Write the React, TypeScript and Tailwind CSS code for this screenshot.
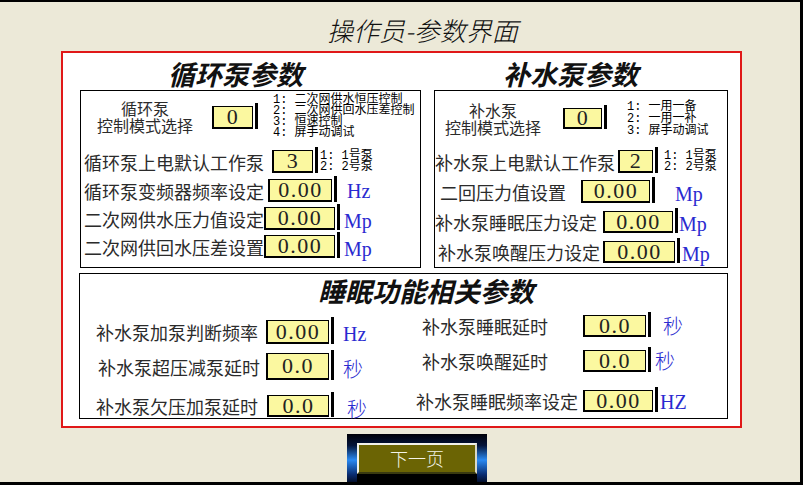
import React from "react";

const cjk = "font-['Noto_Sans_CJK_SC',sans-serif]";

// yellow numeric field with the sunken left/bottom edge and the black bar on the right
function Field({ value, box }: { value: string; box: string }) {
  return (
    <div className={`flex shrink-0 ${box}`}>
      <div className="flex flex-1 items-center justify-center border-t border-r border-b-2 border-l-2 border-black bg-[#fbf8a0] font-['Liberation_Serif',serif] text-[22px] leading-none tracking-[1.5px] text-[#222]">
        {value}
      </div>
      <div className="w-[2px] bg-white" />
      <div className="-mt-[3px] w-[3px] bg-black" />
    </div>
  );
}

function Label({ text, cls }: { text: string; cls: string }) {
  return <div className={`${cjk} shrink-0 whitespace-nowrap text-[18px] leading-[22px] text-[#2b2b2b] ${cls}`}>{text}</div>;
}

function Unit({ text, cls }: { text: string; cls: string }) {
  const font = /[A-Za-z]/.test(text) ? "font-['Liberation_Serif',serif] text-[20px]" : `${cjk} text-[20px] font-light`;
  return <div className={`${font} leading-none text-[#2a2ad0] ${cls}`}>{text}</div>;
}

function Hints({ lines, cls }: { lines: string[]; cls: string }) {
  return (
    <div className={`font-['Liberation_Mono','Noto_Sans_CJK_SC',monospace] text-[12px] whitespace-nowrap text-black ${cls}`}>
      {lines.map((l) => (
        <div key={l}>{l}</div>
      ))}
    </div>
  );
}

function SectionTitle({ text }: { text: string }) {
  return <div className={`${cjk} text-[27px] font-bold italic leading-[30px] text-[#111] whitespace-nowrap`}>{text}</div>;
}

export default function App() {
  return (
    <div className="box-border h-[485px] w-[803px] overflow-hidden border-t-2 border-r-[3px] border-b-[3px] border-black bg-[#ece9d8]">
      <div className={`${cjk} ml-[327px] mt-[13px] text-[26px] font-light italic leading-[30px] text-[#111] whitespace-nowrap`}>
        操作员-参数界面
      </div>

      <div className="ml-[61px] mt-[6px] box-border h-[377px] w-[681px] border-2 border-[#e01818] bg-white">
        {/* top row: circulating pump / make-up pump */}
        <div className="ml-[17px] flex gap-[13px]">
          <div className="w-[341px]">
            <div className="h-[37px] pt-[6px] pl-[88px]">
              <SectionTitle text="循环泵参数" />
            </div>
            <div className="box-border h-[178px] border border-black">
              <div className="mt-[4px] flex h-[44px] items-center">
                <div className={`${cjk} ml-[16px] w-[96px] shrink-0 text-center text-[16px] leading-[17px] text-[#2b2b2b]`}>
                  <div>循环泵</div>
                  <div>控制模式选择</div>
                </div>
                <Field value="0" box="ml-[19px] w-[46px] h-[23px]" />
                <Hints
                  cls="ml-[15px] leading-[11px]"
                  lines={["1: 二次网供水恒压控制", "2: 二次网供回水压差控制", "3: 恒速控制", "4: 屏手动调试"]}
                />
              </div>
              <div className="mt-[11px] flex h-[23px] items-center">
                <Label text="循环泵上电默认工作泵" cls="ml-[3px] text-[16px]" />
                <Field value="3" box="ml-[8px] w-[46px] h-[23px]" />
                <Hints cls="ml-[2px] leading-[11px]" lines={["1: 1号泵", "2: 2号泵"]} />
              </div>
              <div className="mt-[6px] flex h-[23px] items-center">
                <Label text="循环泵变频器频率设定" cls="ml-[3px]" />
                <Field value="0.00" box="ml-[4px] w-[69px] h-[23px]" />
                <Unit text="Hz" cls="ml-[10px]" />
              </div>
              <div className="mt-[5px] flex h-[23px] items-center">
                <Label text="二次网供水压力值设定" cls="ml-[3px]" />
                <Field value="0.00" box="w-[76px] h-[23px]" />
                <Unit text="Mp" cls="ml-[4px] mt-[4px]" />
              </div>
              <div className="mt-[5px] flex h-[23px] items-center">
                <Label text="二次网供回水压差设置" cls="ml-[3px]" />
                <Field value="0.00" box="w-[76px] h-[23px]" />
                <Unit text="Mp" cls="ml-[4px] mt-[4px]" />
              </div>
            </div>
          </div>

          <div className="w-[294px]">
            <div className="h-[37px] pt-[6px] pl-[69px]">
              <SectionTitle text="补水泵参数" />
            </div>
            <div className="box-border h-[178px] border border-black">
              <div className="mt-[9px] flex h-[37px] items-center">
                <div className={`${cjk} ml-[10px] w-[96px] shrink-0 text-center text-[16px] leading-[17px] text-[#2b2b2b]`}>
                  <div>补水泵</div>
                  <div>控制模式选择</div>
                </div>
                <Field value="0" box="ml-[22px] w-[44px] h-[21px]" />
                <Hints cls="ml-[20px] leading-[12px]" lines={["1: 一用一备", "2: 一用一补", "3: 屏手动调试"]} />
              </div>
              <div className="mt-[13px] flex h-[23px] items-center">
                <Label text="补水泵上电默认工作泵" cls="" />
                <Field value="2" box="ml-[3px] w-[40px] h-[23px]" />
                <Hints cls="ml-[6px] leading-[11px]" lines={["1: 1号泵", "2: 2号泵"]} />
              </div>
              <div className="mt-[7px] flex h-[23px] items-center">
                <Label text="二回压力值设置" cls="ml-[5px]" />
                <Field value="0.00" box="ml-[15px] w-[74px] h-[23px]" />
                <Unit text="Mp" cls="ml-[20px] mt-[4px]" />
              </div>
              <div className="mt-[8px] flex h-[22px] items-center">
                <Label text="补水泵睡眠压力设定" cls="" />
                <Field value="0.00" box="ml-[6px] w-[75px] h-[22px]" />
                <Unit text="Mp" cls="ml-[1px] mt-[4px]" />
              </div>
              <div className="mt-[8px] flex h-[22px] items-center">
                <Label text="补水泵唤醒压力设定" cls="ml-[3px]" />
                <Field value="0.00" box="ml-[3px] w-[77px] h-[22px]" />
                <Unit text="Mp" cls="ml-[2px] mt-[4px]" />
              </div>
            </div>
          </div>
        </div>

        {/* sleep-mode parameters */}
        <div className="ml-[16px] mt-[5px] box-border h-[146px] w-[649px] border border-black">
          <div className="mt-[2px] pl-[238px]">
            <SectionTitle text="睡眠功能相关参数" />
          </div>
          <div className="flex">
            <div className="w-[336px]">
              <div className="mt-[14px] flex h-[24px] items-center">
                <Label text="补水泵加泵判断频率" cls="ml-[16px]" />
                <Field value="0.00" box="ml-[8px] w-[68px] h-[24px]" />
                <Unit text="Hz" cls="ml-[9px] mt-[3px]" />
              </div>
              <div className="mt-[9px] flex h-[27px] items-center">
                <Label text="补水泵超压减泵延时" cls="ml-[18px]" />
                <Field value="0.0" box="ml-[6px] w-[68px] h-[27px]" />
                <Unit text="秒" cls="ml-[9px] mt-[4px]" />
              </div>
              <div className="mt-[15px] flex h-[22px] items-center">
                <Label text="补水泵欠压加泵延时" cls="ml-[16px]" />
                <Field value="0.0" box="ml-[9px] w-[67px] h-[22px]" />
                <Unit text="秒" cls="ml-[13px] mt-[6px]" />
              </div>
            </div>
            <div>
              <div className="mt-[9px] flex h-[22px] items-center">
                <Label text="补水泵睡眠延时" cls="ml-[6px]" />
                <Field value="0.0" box="ml-[35px] w-[68px] h-[22px]" />
                <Unit text="秒" cls="ml-[12px]" />
              </div>
              <div className="mt-[13px] flex h-[22px] items-center">
                <Label text="补水泵唤醒延时" cls="ml-[6px]" />
                <Field value="0.0" box="ml-[35px] w-[68px] h-[22px]" />
                <Unit text="秒" cls="ml-[4px]" />
              </div>
              <div className="mt-[18px] flex h-[22px] items-center">
                <Label text="补水泵睡眠频率设定" cls="" />
                <Field value="0.00" box="ml-[5px] w-[75px] h-[22px]" />
                <Unit text="HZ" cls="ml-[2px] mt-[2px]" />
              </div>
            </div>
          </div>
        </div>
      </div>

      {/* next page button */}
      <div className="ml-[347px] mt-[6px] box-border h-[52px] w-[140px] px-[10px] pt-[9px] bg-[linear-gradient(to_bottom,#000008_0%,#04143a_22%,#2a8af2_50%,#0a2c70_78%,#000008_100%)]">
        <div className="bg-black pb-[9px]">
          <div className={`${cjk} box-border flex h-[31px] w-[120px] items-center justify-center border-2 border-t-[#f2f2ea] border-l-[#f2f2ea] border-r-[#d8d8c8] border-b-[#3a3a10] bg-[#6b6404] text-[18px] font-light text-[#f4f4e8]`}>
            下一页
          </div>
        </div>
      </div>
    </div>
  );
}
